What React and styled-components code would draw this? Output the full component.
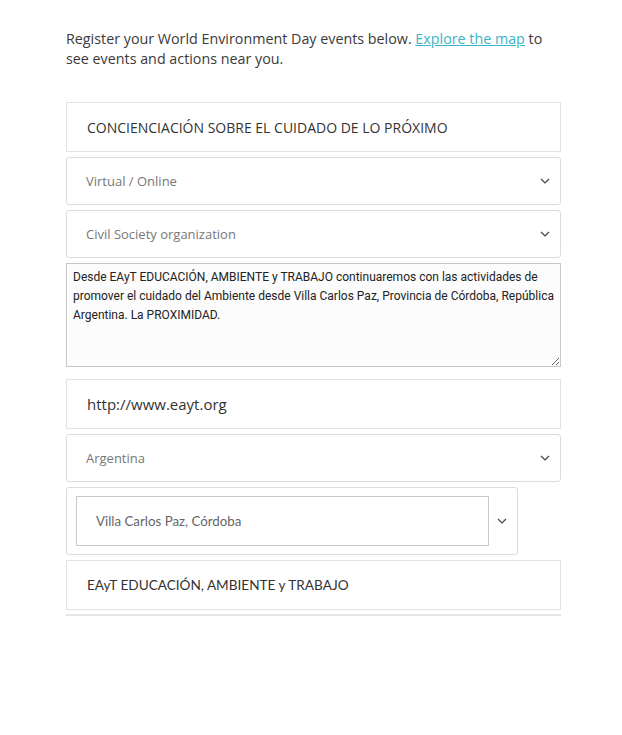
import React from 'react';
import styled, { createGlobalStyle } from 'styled-components';

const GlobalStyle = createGlobalStyle`
  body {
    margin: 0;
    background: #fff;
    font-family: 'Open Sans', 'Liberation Sans', sans-serif;
    color: #333;
  }
`;

const Page = styled.div`
  width: 495px;
  padding: 29px 0 0 66px;
`;

const Intro = styled.p`
  margin: 0 0 33px;
  font-size: 14.3px;
  line-height: 20px;
  color: #3a3a3a;

  a {
    color: #3bb4c9;
    text-decoration: underline;
  }
`;

const Form = styled.div`
  display: flex;
  flex-direction: column;
  gap: 5px;
`;

const Field = styled.div`
  box-sizing: border-box;
  height: 50px;
  border: 1px solid #e3e3e3;
  display: flex;
  align-items: center;
  padding-left: 20px;
  font-size: ${({ size }) => size || 14}px;
  color: #333;
  font-family: ${({ alt }) => (alt ? "'Lato', sans-serif" : 'inherit')};
`;

const Select = styled.div`
  box-sizing: border-box;
  height: 48px;
  border: 1px solid #dcdcdc;
  border-radius: 3px;
  display: flex;
  align-items: center;
  justify-content: space-between;
  padding: 0 10px 0 19px;
  font-size: 13px;
  color: #777;
`;

const TextArea = styled.textarea`
  box-sizing: border-box;
  height: 104px;
  margin: 0;
  border: 1px solid #c8c8c8;
  background: #fcfcfc;
  padding: 4px 6px;
  font-family: Roboto, 'Liberation Sans', sans-serif;
  font-size: 12px;
  line-height: 19px;
  color: #222;
  resize: vertical;
  outline: none;
  overflow: hidden;
`;

const Spacer = styled.div`
  height: 2px;
`;

const CityWrap = styled.div`
  box-sizing: border-box;
  width: 452px;
  height: 68px;
  border: 1px solid #dcdcdc;
  border-radius: 3px;
  display: flex;
  align-items: center;
  padding: 0 10px 0 9px;
  gap: 8px;
`;

const CityInput = styled.div`
  box-sizing: border-box;
  flex: 1;
  height: 50px;
  border: 1px solid #c8c8c8;
  display: flex;
  align-items: center;
  padding-left: 19px;
  font-family: 'Lato', sans-serif;
  font-size: 13.3px;
  color: #666;
`;

const Rule = styled.div`
  height: 2px;
  background: #e6e6e6;
  margin-top: 4px;
`;

const Chevron = () => (
  <svg width="10" height="6" viewBox="0 0 10 6" fill="none">
    <path d="M1 1l4 4 4-4" stroke="#444" strokeWidth="1.2" />
  </svg>
);

const App = () => (
  <Page>
    <GlobalStyle />
    <Intro>
      Register your World Environment Day events below. <a href="#map">Explore the map</a> to see events and
      actions near you.
    </Intro>
    <Form>
      <Field>CONCIENCIACIÓN SOBRE EL CUIDADO DE LO PRÓXIMO</Field>
      <Select>
        Virtual / Online
        <Chevron />
      </Select>
      <Select>
        Civil Society organization
        <Chevron />
      </Select>
      <TextArea
        readOnly
        defaultValue="Desde EAyT EDUCACIÓN, AMBIENTE y TRABAJO continuaremos con las actividades de promover el cuidado del Ambiente desde Villa Carlos Paz, Provincia de Córdoba, República Argentina. La PROXIMIDAD."
      />
      <Spacer />
      <Field size={15}>http://www.eayt.org</Field>
      <Select>
        Argentina
        <Chevron />
      </Select>
      <CityWrap>
        <CityInput>Villa Carlos Paz, Córdoba</CityInput>
        <Chevron />
      </CityWrap>
      <Field alt size={13.6}>
        EAyT EDUCACIÓN, AMBIENTE y TRABAJO
      </Field>
    </Form>
    <Rule />
  </Page>
);

export default App;
